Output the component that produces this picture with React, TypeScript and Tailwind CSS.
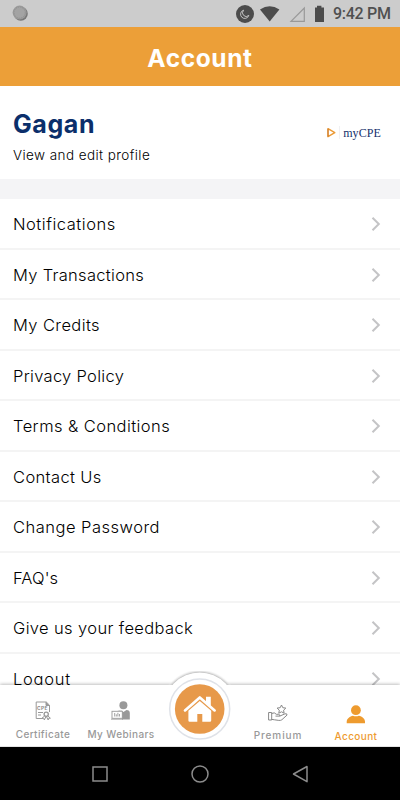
import React from 'react';

interface IMenuItem {
  label: string
  tracking: string
}

const menuItems: IMenuItem[] = [
  { label: 'Notifications', tracking: 'tracking-[0.53px]' },
  { label: 'My Transactions', tracking: 'tracking-[0.3px]' },
  { label: 'My Credits', tracking: 'tracking-[0.4px]' },
  { label: 'Privacy Policy', tracking: 'tracking-[0.3px]' },
  { label: 'Terms & Conditions', tracking: 'tracking-[0.43px]' },
  { label: 'Contact Us', tracking: 'tracking-[0.37px]' },
  { label: 'Change Password', tracking: 'tracking-[0.49px]' },
  { label: "FAQ's", tracking: 'tracking-[0.1px]' },
  { label: 'Give us your feedback', tracking: 'tracking-[0.37px]' },
  { label: 'Logout', tracking: 'tracking-[0.75px]' },
];

function StatusBar() {
  return (
    <div className="flex h-[27px] shrink-0 items-center bg-[#cccccc] pl-3 pr-[9px]">
      <svg width="17" height="17" viewBox="0 0 17 17">
        <circle cx="8.8" cy="8.8" r="7" fill="#777777" />
        <circle cx="7.6" cy="7.6" r="7" fill="#9b9b9b" />
        <circle cx="7.6" cy="7.6" r="5.6" fill="#a3a3a3" stroke="#8c8c8c" strokeWidth="0.8" strokeDasharray="1 1" />
      </svg>
      <svg className="ml-auto" width="90" height="20" viewBox="0 0 90 20">
        <circle cx="10" cy="10" r="9" fill="#4c4c4c" />
        <path d="M8.6 6.2 A4.2 4.2 0 1 0 13.8 11.4 A3.6 3.6 0 0 1 8.6 6.2 Z" fill="none" stroke="#cccccc" strokeWidth="0.9" />
        <path d="M25 5.4 Q34.7 -0.9 44.4 5.4 L34.7 17.6 Z" fill="#4c4c4c" />
        <path d="M56 17.3 H69.3 V4 Z" fill="none" stroke="#999999" strokeWidth="1.2" />
        <path d="M80 3.5 H82 V1.8 H86.4 V3.5 H89 V18 H80 Z" fill="#4c4c4c" />
      </svg>
      <span className="ml-[8px] w-[58px] whitespace-nowrap pt-px font-['Roboto',sans-serif] text-[16px] font-medium leading-5 tracking-[-0.3px] text-[#505050]">
        9:42 PM
      </span>
    </div>
  );
}

function Logo() {
  return (
    <div className="flex h-[14px] items-center">
      <svg width="9" height="11" viewBox="0 0 9 11">
        <path d="M1 1.7 L7.8 5.7 L1 9.7 Z" fill="none" stroke="#eb9a35" strokeWidth="1.4" strokeLinejoin="round" />
        <path d="M1 1.7 V9.7" stroke="#c9772b" strokeWidth="1" />
      </svg>
      <div className="ml-[3px] h-[13px] w-px bg-[#f1f1f3]" />
      <span className="ml-[3px] whitespace-nowrap font-['Liberation_Serif',serif] text-[12px] leading-[14px] tracking-[0.1px] text-[#14306c]">
        myCPE
      </span>
    </div>
  );
}

function CertificateIcon() {
  return (
    <svg width="17" height="20" viewBox="0 0 17 20" fill="none" stroke="#999999" strokeWidth="1">
      <path d="M8 17.5 H1.2 V1 H11.3 L14.5 4.2 V11" />
      <path d="M11 1 V4.5 H14.5" fill="#999999" />
      <path d="M3 11.5 H8 M3 14 H6" />
      <text x="2.1" y="9.2" fontSize="4.8" fontFamily="Inter, sans-serif" fontWeight="700" letterSpacing="0.4" fill="#888888" stroke="none">CPE</text>
      <circle cx="11.2" cy="13.2" r="2.1" strokeWidth="1.3" />
      <path d="M9.8 14.8 L7 17.2 L8.8 17.3 L9.3 19 L11 15.5 M12.6 14.8 L15.4 17.2 L13.7 17.3 L13.2 19 L11.4 15.5" />
    </svg>
  );
}

function WebinarIcon() {
  return (
    <svg width="20" height="19" viewBox="0 0 20 19">
      <circle cx="12.4" cy="4.3" r="4" fill="#999999" />
      <path d="M6.5 9.5 Q7.2 9 9.2 9 L12.4 11 L15.5 9 Q18.8 9 18.8 12 V18.5 H11 V9.5 Z" fill="#999999" />
      <rect x="1" y="10.3" width="10.3" height="7" fill="#ffffff" stroke="#999999" strokeWidth="0.9" />
      <path d="M3.7 12 V15.5 M5.3 13.3 V15.5 M6.9 11.8 V15.5 M8.5 13 V15.5" stroke="#999999" strokeWidth="0.9" />
      <path d="M0 18.2 H12" stroke="#999999" strokeWidth="0.8" />
    </svg>
  );
}

function PremiumIcon() {
  return (
    <svg width="20" height="18" viewBox="0 0 20 18" fill="none" stroke="#888888" strokeWidth="1" strokeLinejoin="round">
      <path d="M13.5 1 L14.8 3.7 L17.8 4.1 L15.6 6.2 L16.1 9.2 L13.5 7.8 L10.8 9.2 L11.3 6.2 L9.1 4.1 L12.2 3.7 Z" />
      <path d="M0.6 8.5 H3.7 V16 H0.6 Z" />
      <path d="M3.7 9.5 Q6.5 7.8 8.4 10.3 H10.8 Q12 10.5 11.8 12.1 H7.5 M11.8 12.1 L17 9.8 Q19.4 9.3 19 11.1 L13.8 15.8 Q12.8 16.6 10.8 16.4 L6.5 15.8 L3.7 15.4" />
    </svg>
  );
}

function AccountIcon() {
  return (
    <svg width="20" height="19" viewBox="0 0 20 19" fill="#ee9b2f">
      <circle cx="9.9" cy="5.2" r="4.9" />
      <path d="M0.7 18.2 V16.4 C1.1 13.2 4 11.5 6.9 10.7 Q9.9 12 12.9 10.7 C16 11.5 18.7 13.2 19 16.4 V18.2 Z" />
    </svg>
  );
}

function HomeButton() {
  return (
    <div className="absolute left-1/2 top-[-14px] -translate-x-1/2">
      <svg width="80" height="78" viewBox="0 0 80 78">
        <defs>
          {/* keeps the bulge shadow above the top edge of the bar */}
          <clipPath id="bulge"><rect x="0" y="0" width="80" height="14" /></clipPath>
          <radialGradient id="halo" gradientUnits="userSpaceOnUse" cx="39.7" cy="38" r="40">
            <stop offset="0.91" stopColor="#bdbdbd" />
            <stop offset="1" stopColor="#ffffff" stopOpacity="0" />
          </radialGradient>
        </defs>
        <circle cx="39.7" cy="38" r="40" fill="url(#halo)" clipPath="url(#bulge)" />
        <circle cx="39.7" cy="38" r="36.4" fill="#ffffff" />
        <circle cx="39.7" cy="38" r="30" fill="#ffffff" stroke="#dfe2e8" strokeWidth="1.5" />
        <circle cx="39.7" cy="38" r="24.8" fill="#e7994a" />
        <path d="M46 32 V25.7 H50.8 V35 Z" fill="#ffffff" />
        <path d="M25 39.4 L39.8 26.5 L54.6 39.4" fill="none" stroke="#ffffff" strokeWidth="2.7" strokeLinecap="round" strokeLinejoin="round" />
        <path d="M28.4 39.8 L39.8 30 L51.2 39.8 V49.5 Q51.2 50.8 49.9 50.8 H42.3 V43 H37.3 V50.8 H29.7 Q28.4 50.8 28.4 49.5 Z" fill="#ffffff" />
      </svg>
    </div>
  );
}

function TabBar() {
  return (
    <nav className="relative z-10 grid h-[62px] shrink-0 grid-cols-[86px_70px_84px_76px_84px] border-b border-[#e4e4e4] bg-white font-['Inter',sans-serif] text-[10px] font-medium leading-3 text-[#999999] shadow-[0_-1px_3px_rgba(0,0,0,0.25)]">
      <div className="flex flex-col items-center pt-[16px]">
        <CertificateIcon />
        <span className="mt-[7px] whitespace-nowrap tracking-[0.4px]">Certificate</span>
      </div>
      <div className="flex flex-col items-center pt-[16px]">
        <WebinarIcon />
        <span className="mt-[8px] whitespace-nowrap tracking-[0.4px]">My Webinars</span>
      </div>
      <div />
      <div className="flex flex-col items-center pt-[19px]">
        <PremiumIcon />
        <span className="mt-[7px] whitespace-nowrap tracking-[0.9px]">Premium</span>
      </div>
      <div className="flex flex-col items-center pr-1 pt-[20px] text-[#ee9b2f]">
        <AccountIcon />
        <span className="mt-[6px] whitespace-nowrap tracking-[0.4px]">Account</span>
      </div>
      <HomeButton />
    </nav>
  );
}

function SystemNav() {
  return (
    <div className="flex h-[53px] shrink-0 items-center justify-center gap-[80px] bg-black">
      <svg width="20" height="20" viewBox="0 0 20 20" fill="none" stroke="#8c8c8c" strokeWidth="1.5">
        <rect x="3" y="3" width="14" height="14" />
      </svg>
      <svg width="20" height="20" viewBox="0 0 20 20" fill="none" stroke="#8c8c8c" strokeWidth="1.5">
        <circle cx="10" cy="10" r="8" />
      </svg>
      <svg width="20" height="20" viewBox="0 0 20 20" fill="none" stroke="#8c8c8c" strokeWidth="1.5" strokeLinejoin="round">
        <path d="M17 2.5 V17.7 L3.5 10 Z" />
      </svg>
    </div>
  );
}

function App() {
  return (
    <div className="flex h-[800px] w-[400px] flex-col overflow-hidden bg-white font-['Inter',sans-serif]">
      <StatusBar />
      <header className="flex h-[59px] shrink-0 items-center justify-center bg-[#ec9f38] pt-[3px]">
        <h1 className="text-[24.5px] font-bold leading-8 tracking-[0.6px] text-white">Account</h1>
      </header>

      <div className="flex h-[93px] shrink-0 items-center justify-between pl-[13px] pr-[19px]">
        <div className="pt-2">
          <h2 className="text-[25px] font-bold leading-8 tracking-[0.6px] text-[#0b2f6b]">Gagan</h2>
          <p className="mt-[5px] text-[13.5px] font-[350] leading-5 tracking-[0.42px] text-[#000000]">View and edit profile</p>
        </div>
        <Logo />
      </div>
      <div className="h-5 shrink-0 bg-[#f4f4f6]" />

      <ul className="min-h-0 flex-1 overflow-hidden">
        {menuItems.map(({ label, tracking }) => (
          <li
            key={label}
            className="flex h-[50.55px] items-center justify-between border-b-2 border-[#f4f4f4] pl-[13px] pr-[19px] pt-[1.5px]"
          >
            <span className={`whitespace-nowrap text-[16.5px] font-[350] leading-6 text-[#000000] ${tracking}`}>{label}</span>
            <svg width="10" height="14" viewBox="0 0 10 14" fill="none" stroke="#c4c4c6" strokeWidth="2">
              <path d="M1.5 0.8 L7.8 7 L1.5 13.2" />
            </svg>
          </li>
        ))}
      </ul>

      <TabBar />
      <SystemNav />
    </div>
  );
}

export default App;
